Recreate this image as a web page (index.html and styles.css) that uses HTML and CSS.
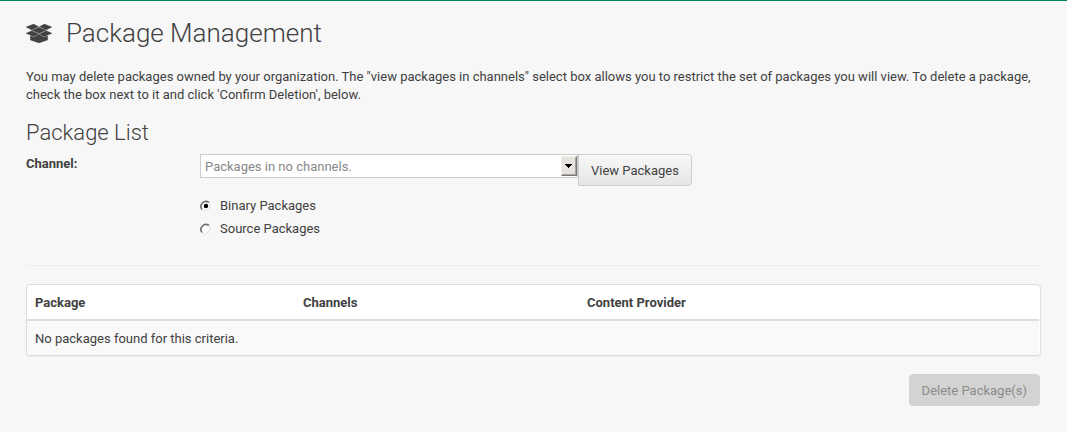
FILE: index.html
```html
<!DOCTYPE html>
<html lang="en">
<head>
<meta charset="utf-8">
<title>Package Management</title>
<link rel="stylesheet" href="styles.css">
</head>
<body>
<main class="page">
  <h1 class="title">
    <svg class="title-icon" viewBox="0 0 78 57" aria-hidden="true">
      <path d="M23 0L38 8L17 18L0 9zM55 0L78 9L61 18L40 8zM39 10L60 19L39 28.5L18 19zM17 20L38 30L24 38L0 28zM61 20L78 28L54 38L40 30zM13 35L24 40L39 31L54 40L65 35V48L39 57L13 48z"/>
    </svg>
    <span>Package Management</span>
  </h1>
  <p class="intro">You may delete packages owned by your organization. The "view packages in channels" select box allows you to restrict the set of packages you will view. To delete a package, check the box next to it and click 'Confirm Deletion', below.</p>
  <h2 class="subtitle">Package List</h2>
  <form class="filter">
    <div class="filter-label">Channel:</div>
    <div class="filter-fields">
      <div class="picker">
        <div class="select">
          <span class="select-value">Packages in no channels.</span>
          <span class="select-arrow"><svg width="7" height="4" viewBox="0 0 7 4" shape-rendering="crispEdges"><path d="M0 0h7v1h-7zM1 1h5v1h-5zM2 2h3v1h-3zM3 3h1v1h-1z"/></svg></span>
        </div>
        <button class="btn" type="button">View Packages</button>
      </div>
      <label class="option"><svg class="radio" viewBox="0 0 12 12"><circle cx="5.5" cy="6" r="5" fill="#fff"/><path d="M2 9.5A5 5 0 0 1 9 2.5" stroke="#707070" stroke-width="1.6"/><path d="M9 2.5A5 5 0 0 1 2 9.5" stroke="#dedbd6"/><circle cx="6" cy="6" r="2.2"/></svg>Binary Packages</label>
      <label class="option"><svg class="radio" viewBox="0 0 12 12"><circle cx="5.5" cy="6" r="5" fill="#fff"/><path d="M2 9.5A5 5 0 0 1 9 2.5" stroke="#707070" stroke-width="1.6"/><path d="M9 2.5A5 5 0 0 1 2 9.5" stroke="#dedbd6"/></svg>Source Packages</label>
    </div>
  </form>
  <hr class="divider">
  <div class="list">
    <div class="list-head"><span>Package</span><span>Channels</span><span>Content Provider</span></div>
    <div class="list-empty">No packages found for this criteria.</div>
  </div>
  <div class="actions"><button class="btn btn-disabled" type="button" disabled>Delete Package(s)</button></div>
</main>
</body>
</html>
```
FILE: styles.css
```css
* { box-sizing: border-box; }
body {
  margin: 0;
  background: #f7f7f7;
  color: #414141;
  font: 13px/18px Roboto, sans-serif;
}
.page {
  height: 432px;
  overflow: hidden;
  border-top: 1px solid #00855f;
  padding: 17px 27px 0 26px;
}
.title {
  display: flex;
  align-items: center;
  gap: 14px;
  height: 30px;
  margin: 0;
  font-size: 26px;
  font-weight: 300;
  line-height: 30px;
}
.title-icon { width: 26px; height: 19px; fill: #414141; stroke: #414141; stroke-width: .8; }
.intro { margin: 20px 0 0; }
.subtitle {
  margin: 16px 0 0;
  font-size: 22px;
  font-weight: 300;
  line-height: 26px;
}
.filter { display: flex; margin-top: 8px; }
.filter-label { width: 174px; padding-top: 1px; font-weight: 700; }
.picker { display: flex; align-items: flex-start; height: 40px; }
.select {
  display: flex;
  align-items: center;
  justify-content: space-between;
  width: 378px;
  height: 24px;
  padding: 0 0 0 4px;
  border: 1px solid #ccc;
  background: #fff;
  color: #888;
}
.select-value { padding-top: 2px; }
.select-arrow {
  display: flex;
  align-items: center;
  justify-content: center;
  width: 16px;
  height: 20px;
  padding-right: 1px;
  border: 1px solid;
  border-color: #f4f2ee #777 #777 #f4f2ee;
  box-shadow: inset -1px -1px #aaa69e;
  background: #e6e3de;
  fill: #000;
}
.btn {
  height: 32px;
  padding: 2px 12px 0;
  border: 1px solid #ccc;
  border-radius: 0 4px 4px 0;
  background: linear-gradient(#f8f8f8, #e6e6e6);
  color: #414141;
  font: inherit;
}
.option { display: flex; align-items: center; height: 23px; gap: 8px; }
.radio { width: 12px; height: 12px; fill: #000; }
.radio path { fill: none; }
.divider { height: 1px; margin: 25px 0 18px; border: 0; background: #eee; }
.list {
  width: 1015px;
  height: 72px;
  border: 1px solid #ddd;
  border-radius: 4px;
  padding-right: 1px;
  background: #fff;
  box-shadow: 0 1px 1px rgba(0, 0, 0, .05);
}
.list-head {
  display: grid;
  grid-template-columns: 268px 284px 1fr;
  height: 36px;
  padding: 9px 8px 0;
  border-bottom: 2px solid #ddd;
  font-weight: 700;
}
.list-empty { height: 34px; padding: 9px 8px; background: #f9f9f9; border-radius: 0 0 3px 3px; }
.actions { display: flex; justify-content: flex-end; margin-top: 18px; }
.btn-disabled { border-color: #d3d3d3; border-radius: 4px; background: #d3d3d3; color: #8b8b8b; }
```
